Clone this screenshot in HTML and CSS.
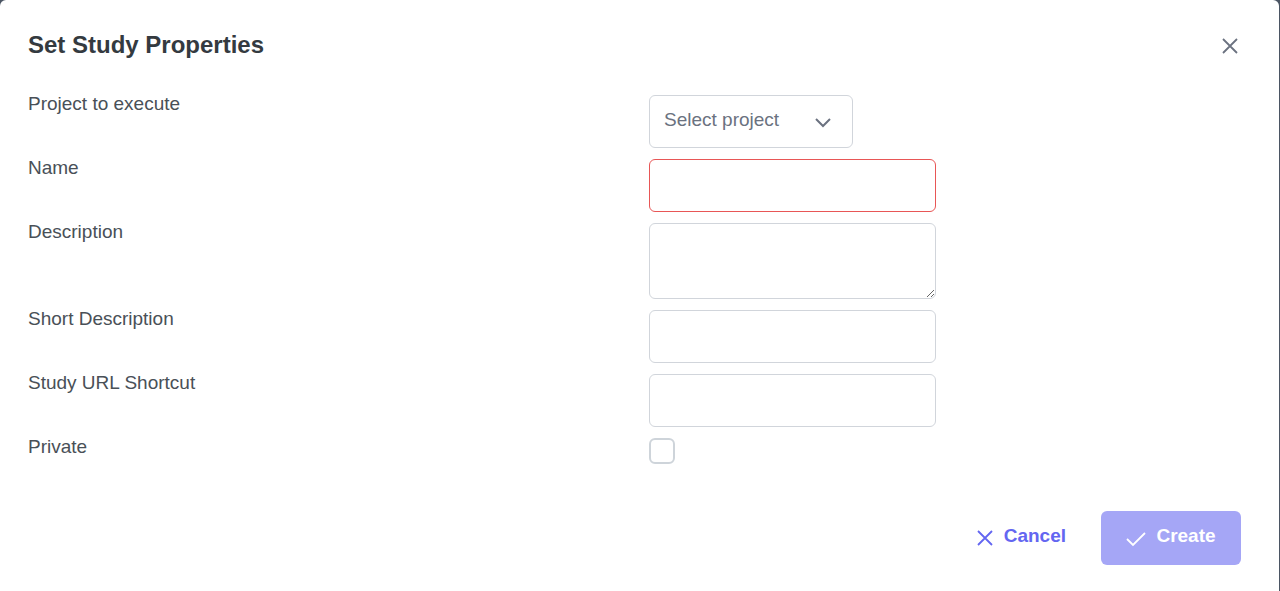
FILE: index.html
```html
<!DOCTYPE html>
<html lang="en">
<head>
<meta charset="utf-8">
<title>Set Study Properties</title>
<link rel="stylesheet" href="styles.css">
</head>
<body>
<div class="dialog">
  <div class="header">
    <h2 class="title">Set Study Properties</h2>
    <button class="close" aria-label="Close">
      <svg width="18" height="18" viewBox="0 0 18 18"><path d="M2 2 L16 16 M16 2 L2 16" stroke="#6b7280" stroke-width="1.8" fill="none"/></svg>
    </button>
  </div>
  <div class="form">
    <label class="label">Project to execute</label>
    <div class="field">
      <div class="select">
        <span>Select project</span>
        <svg width="18" height="18" viewBox="0 0 18 18"><path d="M2 6 L9 13 L16 6" stroke="#6b7280" stroke-width="2" fill="none"/></svg>
      </div>
    </div>

    <label class="label">Name</label>
    <div class="field"><input class="input invalid" type="text"></div>

    <label class="label">Description</label>
    <div class="field"><textarea class="input area"></textarea></div>

    <label class="label">Short Description</label>
    <div class="field"><input class="input" type="text"></div>

    <label class="label">Study URL Shortcut</label>
    <div class="field"><input class="input" type="text"></div>

    <label class="label">Private</label>
    <div class="field"><span class="checkbox"></span></div>
  </div>
  <div class="footer">
    <button class="btn cancel">
      <svg width="18" height="18" viewBox="0 0 18 18"><path d="M2 2 L16 16 M16 2 L2 16" stroke="#6366f1" stroke-width="1.8" fill="none"/></svg>
      <span>Cancel</span>
    </button>
    <button class="btn create">
      <svg width="20" height="18" viewBox="0 0 20 18"><path d="M1 9 L7 15 L19 3" stroke="#ffffff" stroke-width="1.8" fill="none"/></svg>
      <span>Create</span>
    </button>
  </div>
</div>
</body>
</html>
```

FILE: styles.css
```css
* { box-sizing: border-box; }

html, body {
  margin: 0;
  padding: 0;
}

body {
  background: #4b5563;
  font-family: "Liberation Sans", Arial, sans-serif;
  width: 1280px;
  height: 591px;
  overflow: hidden;
}

.dialog {
  width: 1279px;
  height: 591px;
  background: #ffffff;
  border-radius: 6px 6px 0 0;
  padding: 0 28px;
  display: flex;
  flex-direction: column;
}

.header {
  display: flex;
  align-items: center;
  justify-content: space-between;
  padding-top: 30px;
  height: 60px;
}

.title {
  margin: 0;
  font-size: 24px;
  font-weight: 700;
  color: #343a40;
  line-height: 30px;
}

.close {
  border: 0;
  background: none;
  padding: 0;
  margin-right: 12px;
  width: 18px;
  height: 18px;
  display: flex;
  margin-top: 2px;
}

.form {
  margin-top: 35px;
  display: grid;
  grid-template-columns: 621px 287px;
  row-gap: 11px;
}

.label {
  font-size: 19px;
  line-height: 20px;
  color: #495057;
  margin-top: -1px;
}

.field {
  display: flex;
}

.select {
  width: 204px;
  height: 53px;
  border: 1px solid #d1d5db;
  border-radius: 6px;
  display: flex;
  align-items: center;
  justify-content: space-between;
  padding: 0 20px 4px 14px;
  font-size: 19px;
  color: #6b7280;
}

.select svg { margin-top: 4px; }

.input {
  width: 287px;
  height: 53px;
  border: 1px solid #d1d5db;
  border-radius: 6px;
  font-family: inherit;
  font-size: 19px;
  padding: 0 14px;
  outline: none;
  background: #fff;
  margin: 0;
}

.input.invalid { border-color: #e85656; }

.area {
  height: 76px;
  resize: vertical;
  display: block;
}

.checkbox {
  width: 26px;
  height: 26px;
  border: 2px solid #ced4da;
  border-radius: 6px;
  display: block;
}

.footer {
  display: flex;
  justify-content: flex-end;
  align-items: center;
  gap: 35px;
  margin-top: 47px;
  margin-right: 10px;
}

.btn {
  border: 0;
  font-family: inherit;
  font-size: 19px;
  font-weight: 700;
  display: flex;
  align-items: center;
  gap: 10px;
  cursor: pointer;
  border-radius: 6px;
}

.cancel {
  background: none;
  color: #6366f1;
  padding: 0 0 4px 0;
}

.cancel svg { margin-top: 4px; }

.create {
  width: 140px;
  height: 54px;
  padding: 0 0 4px 0;
  background: #a5a6f6;
  color: #ffffff;
  justify-content: center;
}

.create svg { margin-top: 5px; }
```
